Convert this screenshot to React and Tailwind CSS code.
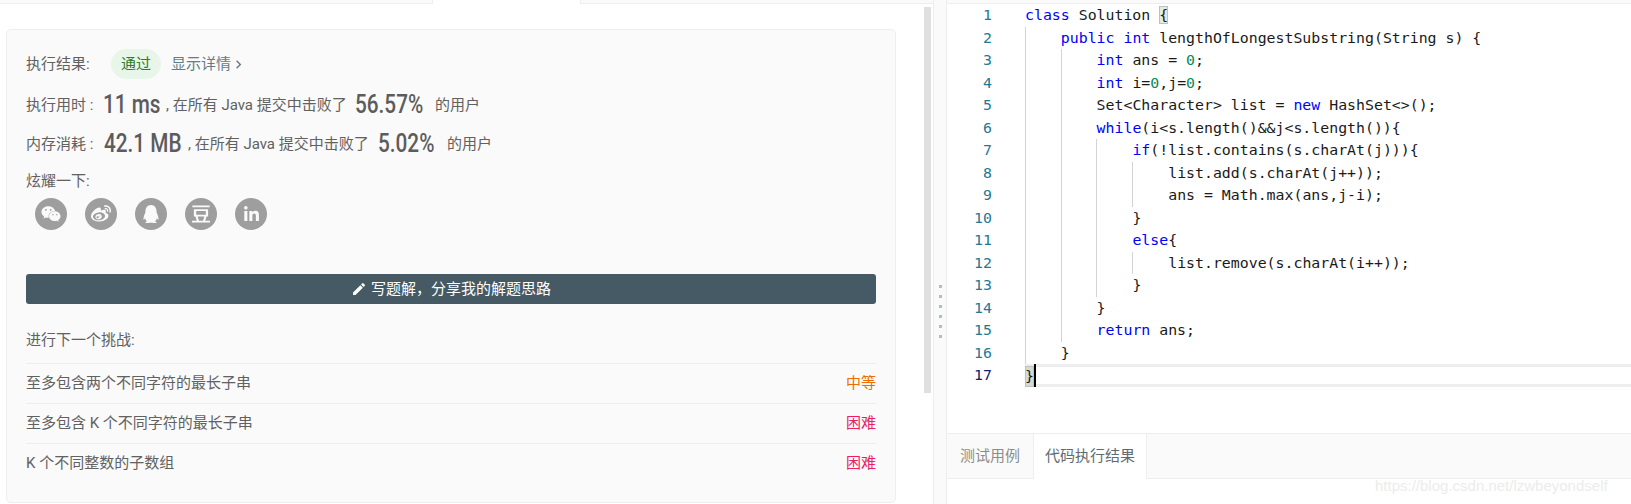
import React from 'react';
import { FaWeixin, FaWeibo, FaQq, FaLinkedinIn } from 'react-icons/fa';
import { SiDouban } from 'react-icons/si';
import { MdEdit, MdChevronRight } from 'react-icons/md';

const k = (t) => ({ t, c: 'text-[#0000ff]' });
const n = (t) => ({ t, c: 'text-[#09885a]' });
const p = (t) => ({ t, c: 'text-[#1a1a1a]' });

// indent, guides, tokens
const code = [
  [0, 0, [k('class'), p(' Solution '), { t: '{', match: true }]],
  [1, 1, [k('public'), p(' '), k('int'), p(' lengthOfLongestSubstring(String s) {')]],
  [2, 2, [k('int'), p(' ans = '), n('0'), p(';')]],
  [2, 2, [k('int'), p(' i='), n('0'), p(',j='), n('0'), p(';')]],
  [2, 2, [p('Set<Character> list = '), k('new'), p(' HashSet<>();')]],
  [2, 2, [k('while'), p('(i<s.length()&&j<s.length()){')]],
  [3, 3, [k('if'), p('(!list.contains(s.charAt(j))){')]],
  [4, 4, [p('list.add(s.charAt(j++));')]],
  [4, 4, [p('ans = Math.max(ans,j-i);')]],
  [3, 3, [p('}')]],
  [3, 3, [k('else'), p('{')]],
  [4, 4, [p('list.remove(s.charAt(i++));')]],
  [3, 3, [p('}')]],
  [2, 2, [p('}')]],
  [2, 2, [k('return'), p(' ans;')]],
  [1, 1, [p('}')]],
];

const guideLeft = ['left-[0px]', 'left-[36px]', 'left-[71px]', 'left-[107px]'];
const indentPad = ['pl-[0px]', 'pl-[35.8px]', 'pl-[71.6px]', 'pl-[107.4px]', 'pl-[143.2px]'];

function Big({ children, width }) {
  return (
    <span className={`inline-block shrink-0 ${width}`}>
      <span className="inline-block origin-left scale-x-[0.83] font-['Roboto',sans-serif] font-medium text-[25px] leading-[30px] text-[#5c5c5c]">
        {children}
      </span>
    </span>
  );
}

function StatRow({ label, labelW, value, valueW, midW, pct, pctW }) {
  return (
    <div className="flex items-center h-[30px] whitespace-nowrap">
      <span className={`shrink-0 ${labelW}`}>{label}</span>
      <Big width={valueW}>{value}</Big>
      <span className={`shrink-0 ${midW}`}>, 在所有 Java 提交中击败了</span>
      <Big width={pctW}>{pct}</Big>
      <span>的用户</span>
    </div>
  );
}

function Next({ title, level, color }) {
  return (
    <div className="flex justify-between items-center h-[40px] border-t border-[#eeeeee]">
      <span>{title}</span>
      <span className={color}>{level}</span>
    </div>
  );
}

function Social({ children }) {
  return (
    <div className="w-[32px] h-[32px] rounded-full bg-[#9e9e9e] flex items-center justify-center text-[#fafafa]">
      {children}
    </div>
  );
}

export default function App() {
  return (
    <div className="relative flex h-screen w-full overflow-hidden bg-white text-[15px] text-[#616161] font-['Roboto','Noto_Sans_CJK_SC',sans-serif]">
      {/* left panel */}
      <div className="w-[934px] shrink-0 flex flex-col border-r border-[#eeeeee]">
        <div className="flex h-[4px] shrink-0">
          <div className="w-[433px] bg-[#fafafa] border-b border-r border-[#eeeeee]" />
          <div className="w-[147px]" />
          <div className="flex-1 bg-[#fafafa] border-b border-l border-[#eeeeee]" />
        </div>
        <div className="flex flex-1 min-h-0">
          <div className="flex-1 pl-[6px] pt-[25px]">
            <div className="w-[890px] bg-[#fafafa] border border-[#eeeeee] rounded-[5px] px-[19px] pt-[19px] pb-[19px]">
              <div className="flex items-center h-[30px]">
                <span className="w-[85px]">执行结果:</span>
                <span className="w-[50px] h-[30px] rounded-full bg-[#e8f5e9] text-[#2e7d32] flex items-center justify-center">通过</span>
                <span className="ml-[10px] text-[#607d8b]">显示详情</span>
                <MdChevronRight className="text-[#607d8b] text-[17px] ml-[-1px]" />
              </div>
              <div className="mt-[11px]">
                <StatRow label="执行用时 :" labelW="w-[77px]" value="11 ms" valueW="w-[63px]" midW="w-[189px]" pct="56.57%" pctW="w-[80px]" />
              </div>
              <div className="mt-[9px]">
                <StatRow label="内存消耗 :" labelW="w-[78px]" value="42.1 MB" valueW="w-[84px]" midW="w-[190px]" pct="5.02%" pctW="w-[69px]" />
              </div>
              <div className="mt-[11px] h-[22px] leading-[22px]">炫耀一下:</div>
              <div className="mt-[6px] pl-[9px] flex gap-[18px]">
                <Social><FaWeixin size={20} /></Social>
                <Social><FaWeibo size={20} /></Social>
                <Social><FaQq size={18} /></Social>
                <Social><SiDouban size={18} /></Social>
                <Social><FaLinkedinIn size={17} /></Social>
              </div>
              <button className="mt-[44px] w-full h-[30px] rounded-[3px] bg-[#455a64] text-white flex items-center justify-center gap-[4px]">
                <MdEdit size={16} />
                <span>写题解，分享我的解题思路</span>
              </button>
              <div className="mt-[25px] h-[22px] leading-[22px]">进行下一个挑战:</div>
              <div className="mt-[12px]">
                <Next title="至多包含两个不同字符的最长子串" level="中等" color="text-[#ef6c00]" />
                <Next title="至多包含 K 个不同字符的最长子串" level="困难" color="text-[#e91e63]" />
                <Next title="K 个不同整数的子数组" level="困难" color="text-[#e91e63]" />
              </div>
            </div>
          </div>
          <div className="w-[7px] h-[386px] mt-[3px] mr-[2px] bg-[#e0e0e0]" />
        </div>
      </div>

      {/* splitter */}
      <div className="w-[12px] shrink-0 bg-[#fafafa] flex flex-col items-center gap-[7px] pt-[285px]">
        {[0, 1, 2, 3, 4, 5].map((i) => (
          <div key={i} className="w-[3px] h-[3px] bg-[#b0bec5]" />
        ))}
      </div>

      {/* editor panel */}
      <div className="flex-1 min-w-0 flex flex-col border-l border-[#eeeeee]">
        <div className="h-[4px] shrink-0 border-b border-[#eeeeee] bg-[#fafafa]" />
        <div className="h-[429px] shrink-0 font-['DejaVu_Sans_Mono',monospace] text-[14.86px]">
          {code.map(([indent, guides, tokens], i) => (
            <div key={i} className="flex h-[22.5px] leading-[22.5px]">
              <div className="w-[45px] shrink-0 text-right text-[#237893]">{i + 1}</div>
              <div className="w-[33px] shrink-0" />
              <div className={`relative flex-1 whitespace-pre ${indentPad[indent]}`}>
                {guideLeft.slice(0, guides).map((g) => (
                  <span key={g} className={`absolute top-0 bottom-0 w-px bg-[#d3d3d3] ${g}`} />
                ))}
                {tokens.map((tk, j) =>
                  tk.match ? (
                    <span key={j} className="bg-[#e3ebe3] outline outline-1 -outline-offset-1 outline-[#b9c4b9] text-[#1a1a1a]">{tk.t}</span>
                  ) : (
                    <span key={j} className={tk.c}>{tk.t}</span>
                  )
                )}
              </div>
            </div>
          ))}
          <div className="flex h-[23px] leading-[22.5px]">
            <div className="w-[45px] shrink-0 text-right text-[#0b216f]">17</div>
            <div className="w-[33px] shrink-0" />
            <div className="relative flex-1 whitespace-pre border-y-[3px] border-[#eeeeee]">
              <span className="absolute top-[-1px] left-0 w-[9px] h-[21px] bg-[#d3dcd3] text-[#1a1a1a] leading-[20px] outline outline-1 -outline-offset-1 outline-[#b9c4b9]">{'}'}</span>
              <span className="absolute top-[-3px] left-[9px] w-[2px] h-[23px] bg-black" />
            </div>
          </div>
        </div>
        <div className="h-[46px] shrink-0 flex bg-[#fafafa] border-y border-[#eeeeee]">
          <div className="w-[86px] flex items-center justify-center text-[#8c8c8c]">测试用例</div>
          <div className="w-[114px] flex items-center justify-center bg-white text-[#5f6b72] border-x border-[#eeeeee] -mb-px">代码执行结果</div>
        </div>
      </div>

      {/* csdn watermark */}
      <div className="absolute left-[1375px] top-[475px] font-['Liberation_Sans',sans-serif] text-[15px] leading-[22px] text-[#ececec]">
        https://blog.csdn.net/lzwbeyondself
      </div>
    </div>
  );
}
